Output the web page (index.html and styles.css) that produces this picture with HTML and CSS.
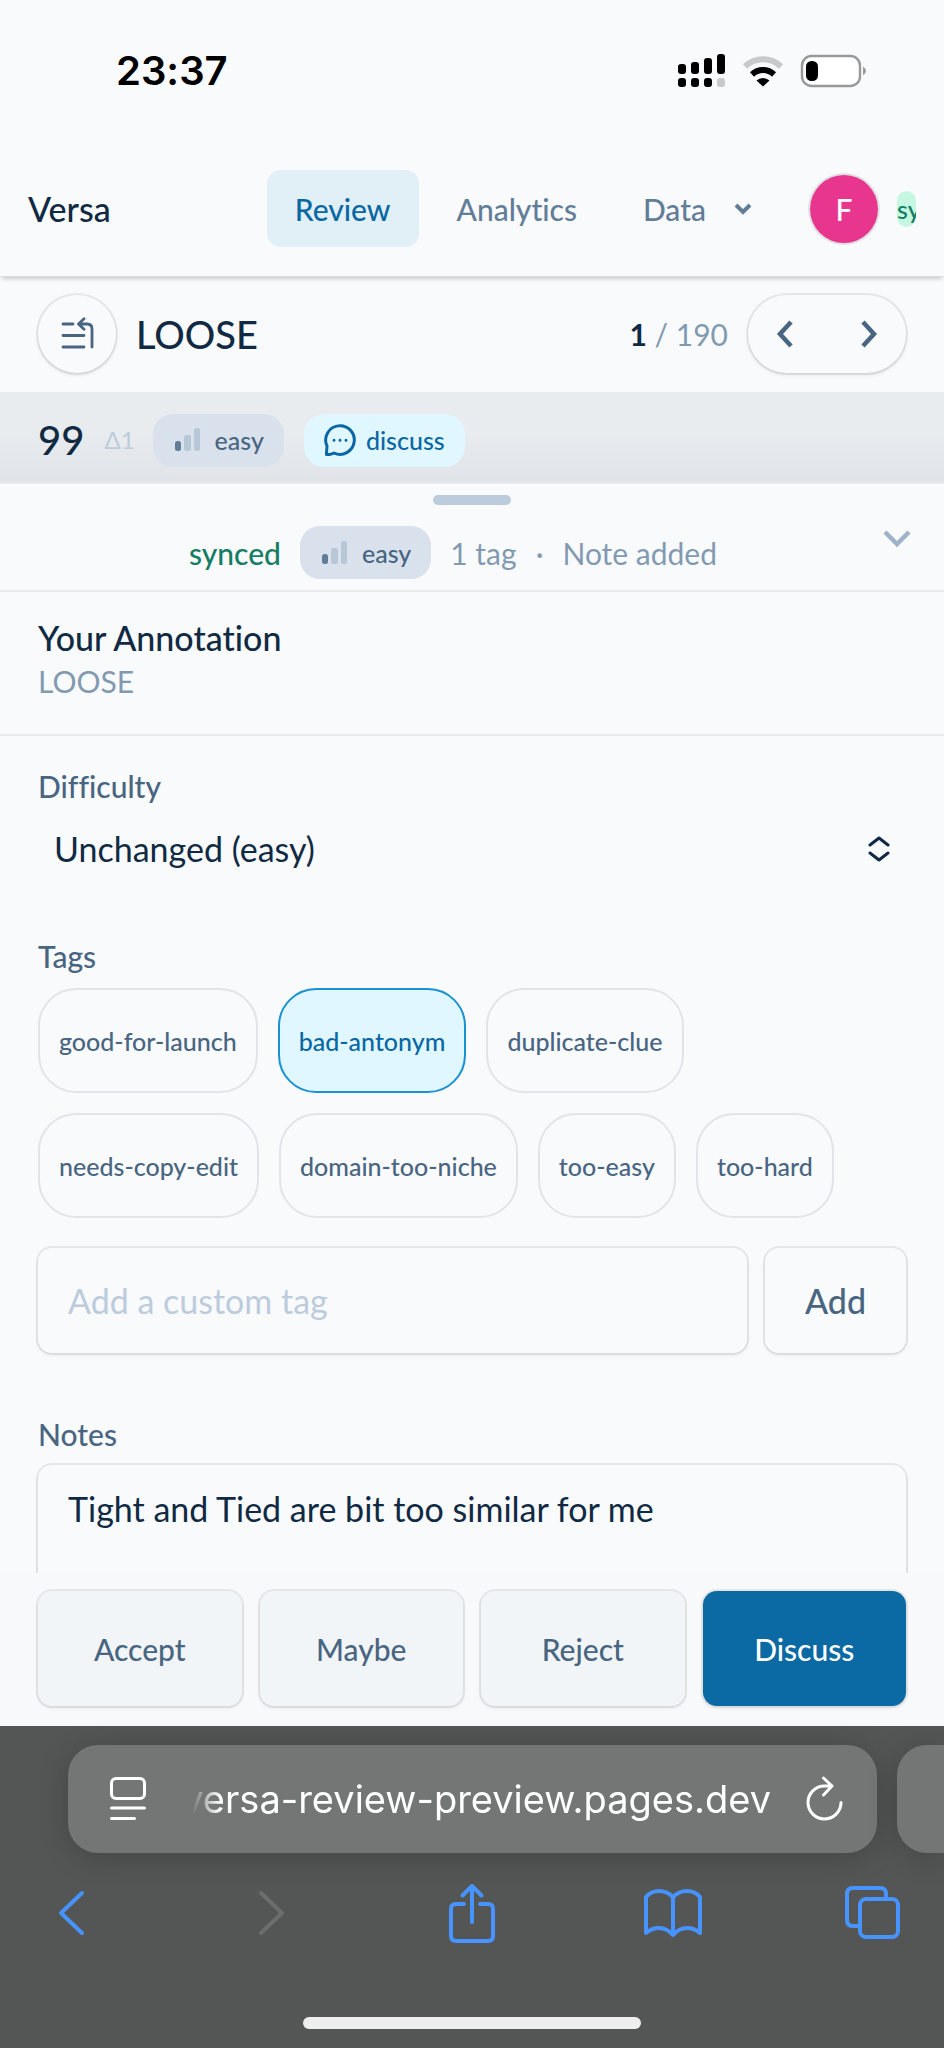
FILE: index.html
```html
<!DOCTYPE html>
<html lang="en">
<head>
  <meta charset="UTF-8" />
  <meta name="viewport" content="width=device-width, initial-scale=1" />
  <title>Versa - Review</title>
  <link rel="stylesheet" href="styles.css">
</head>
<body>

<div class="status-bar">
  <time class="clock">23:37</time>
  <div class="status-icons">
    <svg width="48" height="36" viewBox="0 0 48 36" aria-hidden="true">
      <rect x="0" y="11" width="8" height="10" rx="3"/>
      <rect x="13" y="9" width="8" height="12" rx="3"/>
      <rect x="26" y="5" width="8" height="16" rx="3"/>
      <rect x="39" y="1" width="8" height="20" rx="3"/>
      <rect x="0" y="25" width="8" height="9" rx="3"/>
      <rect x="13" y="25" width="8" height="9" rx="3"/>
      <rect x="26" y="25" width="8" height="9" rx="3"/>
      <rect x="39" y="25" width="8" height="9" rx="3" fill="#c8c9ca"/>
    </svg>
    <svg width="42" height="32" viewBox="0 0 42 32" aria-hidden="true">
      <path d="M3 11.500a26 26 0 0 1 36 0" fill="none" stroke="#c8c9ca" stroke-width="6"/>
      <path d="M10 19.500a16 16 0 0 1 22 0" fill="none" stroke="#000" stroke-width="6"/>
      <path d="M14.500 25.500a9.500 9.500 0 0 1 13 0L21 31.500z"/>
    </svg>
    <svg width="68" height="34" viewBox="0 0 68 34" aria-hidden="true">
      <rect x="2" y="2" width="58" height="30" rx="9.500" fill="#fff" stroke="#999" stroke-width="2.400"/>
      <rect x="6" y="7" width="12" height="20" rx="5.500"/>
      <path d="M63 12.500q6 4.500 0 9z" fill="#999"/>
    </svg>
  </div>
</div>

<header class="top-nav">
  <a class="brand" href="#">Versa</a>
  <nav class="links">
    <a class="link active" href="#review">Review</a>
    <a class="link" href="#analytics">Analytics</a>
    <button class="link menu" type="button">Data
      <svg width="18" height="12" viewBox="0 0 18 12" aria-hidden="true"><path d="M2 2l7 7 7-7" fill="none" stroke="currentColor" stroke-width="4"/></svg>
    </button>
  </nav>
  <button class="avatar" type="button" aria-label="Account">F</button>
  <span class="sync-badge">synced</span>
</header>

<section class="toolbar">
  <button class="round-btn" type="button" aria-label="Back to list">
    <svg width="34" height="34" viewBox="0 0 34 34" fill="none" stroke="currentColor" stroke-width="2.800" stroke-linecap="round" stroke-linejoin="round">
      <path d="M3 7h10M3 18.500h21M3 30h21M19 7h8q5 0 5 5v18M24 1.800L18.500 7l5.500 5.200"/>
    </svg>
  </button>
  <h1>LOOSE</h1>
  <p class="counter"><b>1</b> / 190</p>
  <div class="pager">
    <button type="button" aria-label="Previous">
      <svg width="18" height="28" viewBox="0 0 18 28"><path d="M15 2L4 14l11 12" fill="none" stroke="currentColor" stroke-width="4.500"/></svg>
    </button>
    <button type="button" aria-label="Next">
      <svg width="18" height="28" viewBox="0 0 18 28"><path d="M3 2l11 12L3 26" fill="none" stroke="currentColor" stroke-width="4.500"/></svg>
    </button>
  </div>
</section>

<section class="score-row">
  <strong class="score">99</strong>
  <span class="delta">Δ1</span>
  <span class="pill">
    <svg width="26" height="24" viewBox="0 0 26 24" aria-hidden="true"><rect y="13" width="6" height="10" rx="2.500" fill="#627d98"/><rect x="9" y="7" width="7" height="16" rx="2.500" fill="#b8c7d5"/><rect x="19" y="0" width="6" height="23" rx="2.500" fill="#b8c7d5"/></svg>
    easy
  </span>
  <span class="pill discuss">
    <svg width="32" height="32" viewBox="0 0 32 32" fill="none" stroke="currentColor" stroke-width="3" stroke-linecap="round" stroke-linejoin="round" aria-hidden="true">
      <path d="M2.400 30.500l.6-8.500A14.300 14.300 0 1 1 10 29q-3.500 2-7.600 1.500z"/>
      <path d="M10 16.200h.01M16 16.200h.01M22 16.200h.01"/>
    </svg>
    discuss
  </span>
</section>

<main class="sheet">
  <div class="sheet-head">
    <span class="handle"></span>
    <div class="summary">
      <span class="synced">synced</span>
      <span class="pill">
        <svg width="26" height="24" viewBox="0 0 26 24" aria-hidden="true"><rect y="13" width="6" height="10" rx="2.500" fill="#627d98"/><rect x="9" y="7" width="7" height="16" rx="2.500" fill="#b8c7d5"/><rect x="19" y="0" width="6" height="23" rx="2.500" fill="#b8c7d5"/></svg>
        easy
      </span>
      <span>1 tag</span>
      <span>·</span>
      <span>Note added</span>
    </div>
    <button class="collapse" type="button" aria-label="Collapse">
      <svg width="28" height="18" viewBox="0 0 28 18"><path d="M2 2l12 12L26 2" fill="none" stroke="currentColor" stroke-width="4.500"/></svg>
    </button>
  </div>

  <div class="sheet-title">
    <h2>Your Annotation</h2>
    <p>LOOSE</p>
  </div>

  <form class="fields" id="annotation">
    <div class="field">
      <label for="difficulty">Difficulty</label>
      <div class="select-wrap">
        <select id="difficulty">
          <option>Unchanged (easy)</option>
          <option>medium</option>
          <option>hard</option>
        </select>
        <svg width="22" height="26" viewBox="0 0 22 26" fill="none" stroke="currentColor" stroke-width="3" stroke-linecap="round" stroke-linejoin="round" aria-hidden="true"><path d="M2 9l9-7 9 7M2 17l9 7 9-7"/></svg>
      </div>
    </div>

    <div class="field">
      <label for="custom-tag">Tags</label>
      <div class="tags">
        <button class="tag" type="button">good-for-launch</button>
        <button class="tag selected" type="button" aria-pressed="true">bad-antonym</button>
        <button class="tag" type="button">duplicate-clue</button>
        <button class="tag" type="button">needs-copy-edit</button>
        <button class="tag" type="button">domain-too-niche</button>
        <button class="tag" type="button">too-easy</button>
        <button class="tag" type="button">too-hard</button>
      </div>
      <div class="add-tag">
        <input class="box" id="custom-tag" type="text" placeholder="Add a custom tag">
        <button class="box add" type="button">Add</button>
      </div>
    </div>

    <div class="field">
      <label for="notes">Notes</label>
      <textarea class="box" id="notes">Tight and Tied are bit too similar for me</textarea>
    </div>
  </form>

  <div class="actions">
    <button class="box" type="button">Accept</button>
    <button class="box" type="button">Maybe</button>
    <button class="box" type="button">Reject</button>
    <button class="box primary" type="button">Discuss</button>
  </div>
</main>

<footer class="browser-bar">
  <div class="address-row">
    <div class="address">
      <button type="button" aria-label="Page settings">
        <svg width="36" height="44" viewBox="0 0 36 44" fill="none" stroke="currentColor" stroke-width="3" stroke-linecap="round"><rect x="1.500" y="1.500" width="33" height="20" rx="4.500"/><path d="M1.500 31h33M1.500 41.500h23"/></svg>
      </button>
      <span class="url"><span>versa-review-preview.pages.dev</span></span>
      <button type="button" aria-label="Reload">
        <svg width="38" height="46" viewBox="0 0 38 46" fill="none" stroke="currentColor" stroke-width="3" stroke-linecap="round" stroke-linejoin="round"><path d="M36 26.500A16.500 16.500 0 1 1 19.500 10H27M18.500 2l8.500 8-8.500 9"/></svg>
      </button>
    </div>
    <div class="next-tab"></div>
  </div>
  <nav class="browser-tools">
    <button type="button" aria-label="Back">
      <svg width="28" height="46" viewBox="0 0 28 46"><path d="M25 3L4 23l21 20"/></svg>
    </button>
    <button type="button" aria-label="Forward" disabled>
      <svg width="28" height="46" viewBox="0 0 28 46"><path d="M3 3l21 20L3 43"/></svg>
    </button>
    <button type="button" aria-label="Share">
      <svg width="48" height="60" viewBox="0 0 48 60"><path d="M16 21H8q-5 0-5 5v27q0 5 5 5h32q5 0 5-5V26q0-5-5-5h-8M24 39V5M14.500 12.500L24 3l9.500 9.500"/></svg>
    </button>
    <button type="button" aria-label="Bookmarks">
      <svg width="58" height="50" viewBox="0 0 58 50"><path d="M29 9Q23 3 15 3 7 3 2 9v36q6-5 13-5 8 0 14 7 6-7 14-7 7 0 13 5V9q-5-6-13-6-8 0-14 6zM29 9v37"/></svg>
    </button>
    <button type="button" aria-label="Tabs">
      <svg width="56" height="54" viewBox="0 0 56 54"><rect x="15" y="13" width="38" height="38" rx="6"/><path d="M41 13V8q0-6-6-6H8q-6 0-6 6v26q0 6 6 6h7"/></svg>
    </button>
  </nav>
  <div class="home-indicator"></div>
</footer>

</body>
</html>
```
FILE: styles.css
```css
* {
  box-sizing: border-box;
}
body {
  margin: 0;
  height: 100vh;
  display: flex;
  flex-direction: column;
  overflow: hidden;
  background: #f9fafc;
  color: #102a43;
  font-family: Lato, "Open Sans", sans-serif;
  font-weight: 500;
  font-size: 30px;
  line-height: 40px;
  font-variant-ligatures: none;
}
h1, h2, p {
  margin: 0;
}
button, input, select, textarea {
  font: inherit;
  font-variant-ligatures: none;
  color: inherit;
  border: none;
  background: none;
  padding: 0;
  margin: 0;
}
a {
  color: inherit;
  text-decoration: none;
}
svg {
  display: block;
  flex: none;
}

/* Status bar */
.status-bar {
  display: flex;
  align-items: center;
  justify-content: space-between;
  height: 141px;
  padding: 0 76px 0 116px;
  color: #000;
}
.clock {
  font-family: Inter, sans-serif;
  font-weight: 600;
  font-size: 40px;
}
.status-icons {
  display: flex;
  align-items: center;
  gap: 16px;
}

/* Navigation */
.top-nav {
  display: flex;
  align-items: center;
  height: 136px;
  padding: 0 28px;
  border-bottom: 1px solid #dcdddf;
  box-shadow: 0 4px 4px -2px rgba(0,0,0,0.18);
}
.brand {
  font-size: 34px;
}
.links {
  display: flex;
  margin-left: auto;
}
.link {
  display: flex;
  align-items: center;
  height: 77px;
  padding: 0 28px;
  margin-right: 10px;
  border-radius: 14px;
  color: #627d98;
}
.link.active {
  background: #e1eff7;
  color: #0967a3;
}
.menu {
  gap: 28px;
}
.avatar {
  width: 68px;
  height: 68px;
  margin-left: 20px;
  border-radius: 50%;
  background: #e8368f;
  color: #fff;
  box-shadow: 0 0 0 2px #dfe1e4;
  flex: none;
}
.sync-badge {
  width: 19px;
  margin-left: 19px;
  border-radius: 10px;
  background: #c6f7e2;
  color: #147d64;
  font-size: 25px;
  line-height: 36px;
  overflow: hidden;
}

/* Toolbar */
.toolbar {
  display: flex;
  align-items: center;
  height: 115px;
  padding: 0 38px 2px;
}
.round-btn, .pager {
  display: flex;
  align-items: center;
  justify-content: center;
  height: 78px;
  border-radius: 39px;
  color: #486581;
  box-shadow: 0 0 0 2px rgba(0,0,0,0.07), 0 2px 4px rgba(0,0,0,0.1);
}
.round-btn {
  width: 78px;
}
.toolbar h1 {
  margin-left: 20px;
  font-size: 38px;
  font-weight: 500;
}
.counter {
  margin-left: auto;
  color: #829ab1;
  font-weight: 400;
}
.counter b {
  color: #102a43;
  font-weight: 700;
}
.pager {
  justify-content: space-between;
  width: 158px;
  margin-left: 20px;
  padding: 0 28px;
}

/* Score */
.score-row {
  display: flex;
  align-items: center;
  height: 90px;
  padding: 6px 38px 0;
  background: linear-gradient(#e8ecef 45%, #e0e3e7);
}
.score {
  font-size: 40px;
  font-weight: 500;
}
.delta {
  margin: 0 18px 0 20px;
  color: #bcccdc;
  font-size: 24px;
  font-weight: 400;
}
.pill {
  display: flex;
  align-items: center;
  gap: 14px;
  height: 53px;
  padding: 0 20px 0 22px;
  border-radius: 20px;
  background: #d9e1ec;
  color: #486581;
  font-size: 25px;
}
.pill.discuss {
  gap: 10px;
  margin-left: 20px;
  padding-left: 20px;
  background: #e1f7ff;
  color: #0967a3;
}

/* Bottom sheet */
.sheet {
  display: flex;
  flex-direction: column;
  flex: 1;
  min-height: 0;
  border-top: 2px solid #e8ebee;
}
.sheet-head {
  position: relative;
  display: flex;
  flex-direction: column;
  align-items: center;
  gap: 21px;
  padding: 11px 38px;
  border-bottom: 2px solid #e9ecef;
}
.handle {
  width: 78px;
  height: 10px;
  border-radius: 5px;
  background: #bcccdc;
}
.summary {
  display: flex;
  align-items: center;
  gap: 19px;
  margin-right: 38px;
  color: #829ab1;
  font-weight: 400;
}
.synced {
  color: #147d64;
  font-weight: 500;
}
.summary .pill {
  font-weight: 500;
}
.collapse {
  position: absolute;
  right: 33px;
  top: 46px;
  color: #9fb3c8;
}
.sheet-title {
  padding: 23px 38px 33px;
  border-bottom: 2px solid #e9ecef;
}
.sheet-title h2 {
  font-size: 34px;
  line-height: 46px;
  font-weight: 500;
}
.sheet-title p {
  color: #829ab1;
  font-weight: 400;
}

/* Form */
.fields {
  flex: 1;
  min-height: 0;
  display: flex;
  flex-direction: column;
  gap: 61px;
  padding: 30px 38px 0;
  overflow: hidden;
}
.field label {
  display: block;
  color: #486581;
}
.select-wrap {
  display: flex;
  align-items: center;
  margin-top: 17px;
  padding: 0 16px;
  font-size: 34px;
  font-weight: 400;
}
.select-wrap select {
  flex: 1;
  height: 52px;
  appearance: none;
}
.tags {
  display: flex;
  flex-wrap: wrap;
  gap: 20px;
  margin-top: 12px;
}
.tag {
  height: 105px;
  padding: 0 19px;
  border: 2px solid #e2e4e9;
  border-radius: 38px;
  color: #486581;
  font-size: 25px;
}
.tag.selected {
  border-color: #1992d4;
  background: #e1f7ff;
  color: #0967a3;
}
.add-tag {
  display: flex;
  gap: 18px;
  margin-top: 30px;
}
.box {
  border-radius: 14px;
  box-shadow: 0 0 0 2px rgba(0,0,0,0.07), 0 2px 4px rgba(0,0,0,0.08);
}
input.box, textarea.box {
  font-size: 34px;
  line-height: 44px;
  font-weight: 400;
}
input.box {
  flex: 1;
  min-width: 0;
  height: 105px;
  padding: 0 30px;
}
input.box::placeholder {
  color: #bcccdc;
}
.add {
  padding: 0 40px;
  color: #486581;
  font-size: 34px;
}
textarea.box {
  display: block;
  width: 100%;
  height: 240px;
  margin-top: 11px;
  padding: 22px 30px;
  resize: none;
}

/* Actions */
.actions {
  display: flex;
  gap: 18px;
  padding: 18px 38px 20px;
  background: #f8f9fb;
}
.actions .box {
  flex: 1;
  height: 115px;
  background: #f2f5f8;
  color: #486581;
}
.actions .box.primary {
  background: #0b69a3;
  color: #fff;
}

/* Browser chrome */
.browser-bar {
  background: #545655;
  color: #fff;
}
.address-row {
  display: flex;
  gap: 20px;
  padding: 19px 0 0 68px;
}
.address {
  display: flex;
  align-items: center;
  flex: 1;
  min-width: 0;
  height: 108px;
  padding: 0 34px 0 42px;
  border-radius: 30px;
  background: #747675;
  box-shadow: 0 4px 30px rgba(0,0,0,0.2);
}
.url {
  display: flex;
  justify-content: flex-end;
  flex: 1;
  min-width: 0;
  margin: 0 34px 0 46px;
  overflow: hidden;
  white-space: nowrap;
  font-family: Inter, sans-serif;
  font-weight: 400;
  font-size: 38px;
  line-height: 52px;
  mask-image: linear-gradient(90deg, transparent, #000 28px);
}
.next-tab {
  width: 47px;
  border-radius: 30px 0 0 30px;
  background: #747675;
  box-shadow: 0 4px 30px rgba(0,0,0,0.2);
}
.browser-tools {
  display: flex;
  align-items: center;
  justify-content: space-between;
  height: 120px;
  padding: 0 42px;
}
.browser-tools button {
  display: flex;
  justify-content: center;
  width: 58px;
}
.browser-tools svg {
  fill: none;
  stroke: #4793ff;
  stroke-width: 4px;
  stroke-linecap: round;
  stroke-linejoin: round;
}
.browser-tools button:disabled svg {
  stroke: #6c6e6d;
}
.home-indicator {
  width: 338px;
  height: 12px;
  margin: 44px auto 19px;
  border-radius: 6px;
  background: #eee;
}
```
